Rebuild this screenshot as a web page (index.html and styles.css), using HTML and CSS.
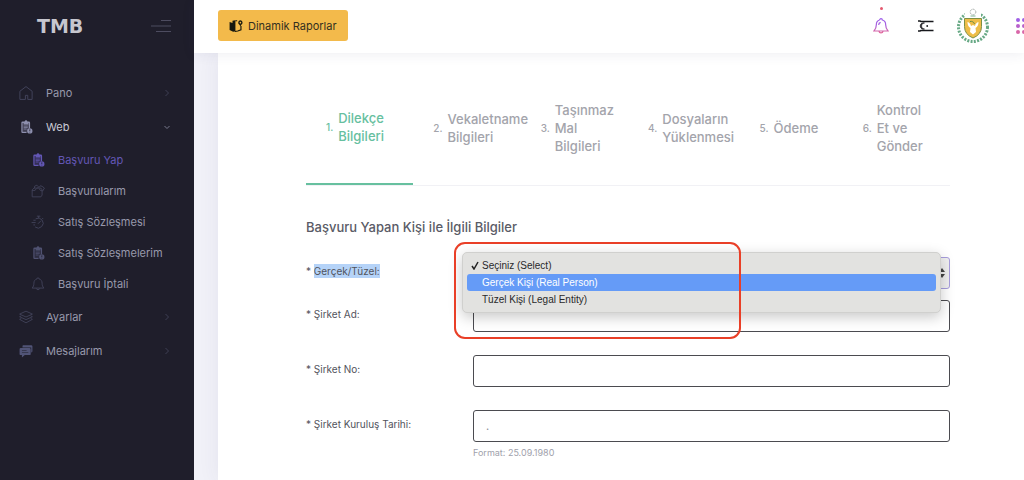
FILE: index.html
```html
<!DOCTYPE html>
<html lang="tr">
<head>
<meta charset="utf-8">
<title>TMB</title>
<link rel="stylesheet" href="styles.css">
</head>
<body>
<svg class="defs" aria-hidden="true">
  <defs>
    <symbol id="clip" viewBox="0 0 24 24"><path fill="currentColor" fill-rule="evenodd" d="M8 2.500h1.500a2.600 2.600 0 0 1 5 0H17a2 2 0 0 1 2 2V14h-2.200V5H16v2.500H8V5H6.200v15H13v2.200H6a2 2 0 0 1-2-2V4.500a2 2 0 0 1 2-2z"/><path fill="currentColor" opacity=".3" d="M6 5h11v9l-3 6H6z"/><path fill="none" stroke="currentColor" stroke-width="1.300" d="M8 10.500h7M8 13h7M8 15.500h5"/><circle cx="18.500" cy="18.700" r="4.600" fill="currentColor"/><path d="M18.500 16v3M18.500 20.200v1" stroke="#1f1e2b" stroke-width="1.300"/></symbol>
    <symbol id="bell" viewBox="0 0 24 24"><path fill="none" stroke="currentColor" stroke-width="1.600" d="M10 3.500a2 2 0 0 1 4 0c3.500 1 5 3.500 5 7 0 4 1 6 3 8.500H2c2-2.500 3-4.500 3-8.500 0-3.500 1.500-6 5-7M9 19.500c.5 3 5.500 3 6 0"/></symbol>
    <symbol id="right" viewBox="0 0 8 8"><path fill="none" stroke="currentColor" d="M2.500 1l3 3-3 3"/></symbol>
    <symbol id="down" viewBox="0 0 8 8"><path fill="none" stroke="currentColor" d="M1.500 3l2.500 2.500L6.500 3"/></symbol>
  </defs>
</svg>
<div class="app">
  <aside class="sidebar">
    <div class="brand">
      <a class="logo" href="#">TMB</a>
      <button class="toggle" type="button" aria-label="Menü"><svg viewBox="0 0 20 14"><path d="M10 1.500h10M0 7h20M5 12.500h15" stroke="currentColor"/></svg></button>
    </div>
    <nav>
      <ul class="menu">
        <li><a class="item" href="#"><svg class="icon" viewBox="0 0 24 24"><path fill="none" stroke="currentColor" stroke-width="1.700" d="M1.500 9L12 1l10.500 8v14H15v-7h-4v7H1.500z"/></svg>Pano<svg class="arrow"><use href="#right"/></svg></a></li>
        <li><a class="item open" href="#"><svg class="icon"><use href="#clip"/></svg>Web<svg class="arrow"><use href="#down"/></svg></a>
          <ul class="submenu">
            <li><a class="sub current" href="#"><svg class="icon"><use href="#clip"/></svg>Başvuru Yap</a></li>
            <li><a class="sub" href="#"><svg class="icon" viewBox="0 0 24 24"><path fill="none" stroke="currentColor" stroke-width="1.500" d="M2 10l3-3h12l2 3v9l-2 3H2zM6 7V4l4-2 3 3-3 3M14 6l2-3 3 1 4 3-3 5-4-1-2-3M2 11h5l2-3"/></svg>Başvurularım</a></li>
            <li><a class="sub" href="#"><svg class="icon" viewBox="0 0 24 24"><path fill="none" stroke="currentColor" stroke-width="1.600" d="M10 2h6M13 2v3M8 6.500a8.500 8.500 0 1 1-1 14M19 5l2 2M12 15l5-5M4 9h4M1 13h7M4 17h3"/></svg>Satış Sözleşmesi</a></li>
            <li><a class="sub" href="#"><svg class="icon dim"><use href="#clip"/></svg>Satış Sözleşmelerim</a></li>
            <li><a class="sub" href="#"><svg class="icon"><use href="#bell"/></svg>Başvuru İptali</a></li>
          </ul>
        </li>
        <li><a class="item" href="#"><svg class="icon" viewBox="0 0 24 24"><path fill="none" stroke="currentColor" stroke-width="1.500" d="M12 2l11 5-11 5L1 7zM4 10l-3 1.500 11 5 11-5L20 10M4 14.500L1 16l11 6 11-6-3-1.500"/></svg>Ayarlar<svg class="arrow"><use href="#right"/></svg></a></li>
        <li><a class="item" href="#"><svg class="icon chat" viewBox="0 0 24 24"><path fill="currentColor" d="M7 2h14a2 2 0 0 1 2 2v9l-2 2V6H6V3z"/><path fill="currentColor" fill-rule="evenodd" d="M3 7h15a2 2 0 0 1 2 2v8a2 2 0 0 1-2 2h-8l-5 4v-4H3a2 2 0 0 1-2-2V9a2 2 0 0 1 2-2zm2 4v1h8v-1zm0 3v1h11v-1z"/></svg>Mesajlarım<svg class="arrow"><use href="#right"/></svg></a></li>
      </ul>
    </nav>
  </aside>
  <div class="main">
    <header class="topbar">
      <button class="reports" type="button"><svg viewBox="0 0 24 24"><path fill="#17180f" d="M1 5l5 2V3l5-1v19l-4 1-6-3z"/><path fill="none" stroke="#17180f" stroke-width="2" d="M10 21.500l5-1 5.500-2V12M11 3h3"/><path fill="#17180f" fill-rule="evenodd" d="M19.500 2a4 4 0 0 1 2 7.300l-2 3-2-3a4 4 0 0 1 2-7.300zm0 2.700a1.300 1.300 0 1 0 .1 0z"/></svg>Dinamik Raporlar</button>
      <div class="tools">
        <button class="tool" type="button" aria-label="Bildirimler"><svg class="alert" viewBox="0 0 24 24"><defs><linearGradient id="g" x2="0" y2="1"><stop stop-color="#9b5cea"/><stop offset=".5" stop-color="#a85fdc"/><stop offset="1" stop-color="#e2689a"/></linearGradient></defs><path fill="none" stroke="url(#g)" stroke-width="1.800" d="M10 3a2 2 0 0 1 4 0c3.500 1 5 3.500 5 7 0 4 1 6.500 3.500 9.500h-21C4 16.500 5 14 5 10c0-3.500 1.500-6 5-7M9 20c.5 3 5.500 3 6 0M8.500 10.500c0-2 1-3.500 3-4"/></svg><span class="dot"></span></button>
        <button class="tool" type="button" aria-label="Dil"><svg class="flag" viewBox="0 0 16 12"><path d="M0 1h2l1 .5h12.500M0 11h2l1-.5h12.500" fill="none" stroke="#17181c" stroke-width="1.400"/><path d="M6.500 3A3.200 3.200 0 1 0 6.500 9 2.600 2.600 0 1 1 6.500 3z" fill="#17181c" stroke="#17181c" stroke-width=".6"/><circle cx="9.200" cy="6" r=".9" fill="#17181c"/></svg></button>
        <button class="tool" type="button" aria-label="Profil"><svg class="crest" viewBox="0 0 34 36"><circle cx="17" cy="19" r="14.500" fill="none" stroke="#4c9a70" stroke-width="3" stroke-dasharray="2 1.300" opacity=".85"/><path d="M9 0h16v9H9z" fill="#fff"/><circle cx="17" cy="4" r="2.800" fill="#fff" stroke="#9aa29e" stroke-dasharray="1 .6"/><path d="M14.500 8h5" stroke="#7db494"/><path d="M8.500 10.500h17v8q0 8-8.500 11.500-8.500-3.500-8.500-11.500z" fill="#eebd48" stroke="#7d8f45"/><path d="M11.500 14c0 3 1 5 3 6l-.5 4 3 2.500 3-2.500-.5-4c2-1 3-3 3-6-2 .5-3 2-3.500 4l-2-1-2 1c-.5-2-1.500-3.500-3.500-4z" fill="#fff"/><path d="M14 13.500c2-.5 4 .5 4.500 2.500" fill="none" stroke="#6c8d45"/></svg></button>
        <button class="tool apps" type="button" aria-label="Uygulamalar"><svg viewBox="0 0 8 18"><g fill="#a05fe6"><circle cx="2" cy="3" r="2"/><circle cx="8" cy="3" r="2"/></g><g fill="#b860cc"><circle cx="2" cy="9" r="2"/><circle cx="8" cy="9" r="2"/></g><g fill="#d966a8"><circle cx="2" cy="15" r="2"/><circle cx="8" cy="15" r="2"/></g></svg></button>
      </div>
    </header>
    <main class="card">
      <ol class="steps">
        <li class="step active"><small>1.</small><span>Dilekçe Bilgileri</span></li>
        <li class="step"><small>2.</small><span>Vekaletname Bilgileri</span></li>
        <li class="step"><small>3.</small><span>Taşınmaz Mal Bilgileri</span></li>
        <li class="step"><small>4.</small><span>Dosyaların Yüklenmesi</span></li>
        <li class="step"><small>5.</small><span>Ödeme</span></li>
        <li class="step"><small>6.</small><span>Kontrol Et ve Gönder</span></li>
      </ol>
      <form class="form">
        <h1>Başvuru Yapan Kişi ile İlgili Bilgiler</h1>
        <div class="row tight">
          <label for="type">* <mark>Gerçek/Tüzel:</mark></label>
          <div class="field">
            <select id="type"><option></option></select>
            <svg class="updown" viewBox="0 0 6 10"><path d="M0 4l3-4 3 4zM0 6l3 4 3-4z" fill="#444"/></svg>
            <ul class="popup" role="listbox">
              <li role="option" aria-selected="true"><svg viewBox="0 0 8 9"><path d="M1 5l2 3 4-7" fill="none" stroke="#222" stroke-width="1.500"/></svg>Seçiniz (Select)</li>
              <li class="hover" role="option">Gerçek Kişi (Real Person)</li>
              <li role="option">Tüzel Kişi (Legal Entity)</li>
            </ul>
            <div class="marker"></div>
          </div>
        </div>
        <div class="row">
          <label for="name">* Şirket Ad:</label>
          <div class="field"><input id="name" type="text"></div>
        </div>
        <div class="row">
          <label for="number">* Şirket No:</label>
          <div class="field"><input id="number" type="text"></div>
        </div>
        <div class="row">
          <label for="date">* Şirket Kuruluş Tarihi:</label>
          <div class="field"><input id="date" type="text" placeholder="."><p class="hint">Format: 25.09.1980</p></div>
        </div>
      </form>
    </main>
  </div>
</div>
</body>
</html>
```
FILE: styles.css
```css
* { box-sizing: border-box; }
body { margin: 0; background: #f1f1f8; color: #52535c; font-family: Inter, "Noto Sans", sans-serif; font-size: 11px; }
ul, ol { list-style: none; margin: 0; padding: 0; }
a { color: inherit; text-decoration: none; }
button { font: inherit; border: 0; background: none; padding: 0; }
svg { display: block; flex: none; }
.defs { position: absolute; width: 0; height: 0; }
.app { display: flex; height: 100vh; overflow: hidden; }

.sidebar { flex: none; width: 194px; background: #1f1e2b; color: #9899ac; }
.brand { display: flex; align-items: center; justify-content: space-between; height: 52px; padding: 0 23px 0 37px; }
.logo { color: #c6c6ce; font: bold 19px/20px "DejaVu Sans", sans-serif; }
.toggle { color: #4d4c60; }
.toggle svg { width: 20px; height: 14px; }
.menu { padding-top: 24px; }
.submenu { padding-bottom: 1px; }
.item, .sub { display: flex; align-items: center; }
.item { height: 34px; padding: 0 23px 0 19px; gap: 13px; }
.sub { height: 31px; padding-left: 31px; gap: 13px; }
.icon { width: 14px; height: 14px; color: #42435a; }
.icon.dim { color: #505272; }
.chat { color: #515477; }
.item.open { color: #c9cad6; }
.item.open .icon { color: #8d8fae; }
.sub.current, .sub.current .icon { color: #6357b5; }
.arrow { width: 8px; height: 8px; margin-left: auto; color: #3e3f54; }
.open .arrow { color: #77788c; }

.main { flex: 1; min-width: 0; display: flex; flex-direction: column; }
.topbar { flex: none; z-index: 1; display: flex; align-items: center; justify-content: space-between; height: 53px; padding-left: 24px; background: #fff; box-shadow: 0 1px 12px rgba(60, 60, 100, .09); }
.reports { display: flex; align-items: center; gap: 5px; height: 31px; margin-bottom: 2px; padding: 0 11px; border-radius: 3px; background: #f3ba4b; color: #33301f; font-size: 11px; }
.reports svg { width: 14px; height: 14px; }
.tools { display: flex; align-items: center; margin-bottom: 2px; }
.tool { position: relative; margin-right: 29px; }
.alert { width: 16px; height: 16px; }
.flag { width: 16px; height: 12px; }
.tool:nth-child(2) { margin-right: 22px; }
.tool:nth-child(3) { margin-right: 26px; }
.tool.apps { margin-right: 0; }
.apps svg { width: 8px; height: 18px; }
.crest { width: 34px; height: 36px; }
.dot { position: absolute; top: -11px; left: 7px; width: 3px; height: 3px; border-radius: 50%; background: #e5596f; }

.card { flex: 1; margin-left: 24px; padding: 18px 74px 0 88px; background: #fff; box-shadow: 0 0 20px rgba(60, 60, 100, .07); }
.steps { display: grid; grid-template-columns: repeat(6, minmax(0, 1fr)); border-bottom: 1px solid #f1f1f5; }
.step { display: flex; align-items: center; justify-content: safe center; gap: 5px; height: 114px; padding: 0 20px; color: #a3a4ab; font-size: 13px; font-weight: 500; line-height: 18px; }
.step small { font-size: 10px; }
.step.active { color: #67c09f; border-bottom: 2px solid #67c09f; }

.form h1 { margin: 31px 0 20px; color: #5a5b66; font-size: 13px; font-weight: 500; line-height: 20px; }
.row { display: grid; grid-template-columns: 167px minmax(0, 1fr); margin-bottom: 23px; }
.row.tight { margin-bottom: 11px; }
.row label { line-height: 29px; font-size: 10px; }
mark { padding: 1px 0; background: #b5d3f8; color: inherit; }
.field { position: relative; }
.field input, .field select { display: block; width: 100%; height: 32px; padding: 0 12px; border: 1px solid #4b4b50; border-radius: 3px; background: #fff; font: inherit; }
.field select { appearance: none; border-color: #a79ddd; background: #f0f0f0; }
.field input::placeholder { color: #8b8c96; }
.updown { position: absolute; top: 11px; right: 5px; width: 6px; height: 10px; }
.hint { margin: 5px 0 0; color: #a0a1ab; font-size: 9px; line-height: 12px; }
.popup { position: absolute; z-index: 1; top: -5px; left: -11px; right: 9px; padding: 4px; border: 1px solid #d0d0ce; border-radius: 5px; background: #e2e2e0; box-shadow: 0 4px 14px rgba(0, 0, 0, .22); color: #29292b; font: 10px/17px "Liberation Sans", Arial, sans-serif; }
.popup li { position: relative; padding-left: 15px; border-radius: 3px; }
.popup svg { position: absolute; top: 4px; left: 4px; width: 8px; height: 9px; }
.popup .hover { background: #659bf7; color: #fff; }
.marker { position: absolute; z-index: 2; top: -15px; left: -19px; width: 287px; height: 97px; border: 2px solid #e93f27; border-radius: 11px; }
```
